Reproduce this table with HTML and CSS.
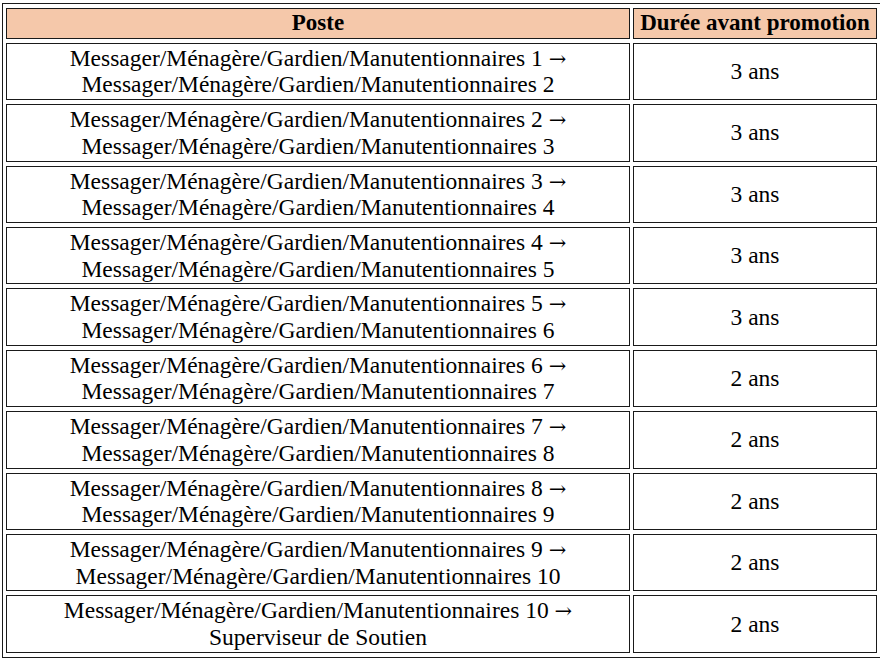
FILE: index.html
```html
<!DOCTYPE html>
<html>
<head>
<meta charset="utf-8">
<title>Promotions</title>
<link rel="stylesheet" href="styles.css">
</head>
<body>
<table class="promo">
  <thead>
    <tr><th class="col-poste">Poste</th><th class="col-duree">Durée avant promotion</th></tr>
  </thead>
  <tbody>
    <tr><td class="poste">Messager/Ménagère/Gardien/Manutentionnaires 1 <span class="arrow">→</span><br>Messager/Ménagère/Gardien/Manutentionnaires 2</td><td class="duree">3 ans</td></tr>
    <tr><td class="poste">Messager/Ménagère/Gardien/Manutentionnaires 2 <span class="arrow">→</span><br>Messager/Ménagère/Gardien/Manutentionnaires 3</td><td class="duree">3 ans</td></tr>
    <tr><td class="poste">Messager/Ménagère/Gardien/Manutentionnaires 3 <span class="arrow">→</span><br>Messager/Ménagère/Gardien/Manutentionnaires 4</td><td class="duree">3 ans</td></tr>
    <tr><td class="poste">Messager/Ménagère/Gardien/Manutentionnaires 4 <span class="arrow">→</span><br>Messager/Ménagère/Gardien/Manutentionnaires 5</td><td class="duree">3 ans</td></tr>
    <tr><td class="poste">Messager/Ménagère/Gardien/Manutentionnaires 5 <span class="arrow">→</span><br>Messager/Ménagère/Gardien/Manutentionnaires 6</td><td class="duree">3 ans</td></tr>
    <tr><td class="poste">Messager/Ménagère/Gardien/Manutentionnaires 6 <span class="arrow">→</span><br>Messager/Ménagère/Gardien/Manutentionnaires 7</td><td class="duree">2 ans</td></tr>
    <tr><td class="poste">Messager/Ménagère/Gardien/Manutentionnaires 7 <span class="arrow">→</span><br>Messager/Ménagère/Gardien/Manutentionnaires 8</td><td class="duree">2 ans</td></tr>
    <tr><td class="poste">Messager/Ménagère/Gardien/Manutentionnaires 8 <span class="arrow">→</span><br>Messager/Ménagère/Gardien/Manutentionnaires 9</td><td class="duree">2 ans</td></tr>
    <tr><td class="poste">Messager/Ménagère/Gardien/Manutentionnaires 9 <span class="arrow">→</span><br>Messager/Ménagère/Gardien/Manutentionnaires 10</td><td class="duree">2 ans</td></tr>
    <tr><td class="poste">Messager/Ménagère/Gardien/Manutentionnaires 10 <span class="arrow">→</span><br>Superviseur de Soutien</td><td class="duree">2 ans</td></tr>
  </tbody>
</table>
</body>
</html>
```
FILE: styles.css
```css
html, body {
  background: #ffffff;
}
body {
  margin: 3px 2px 0 2px;
  font-family: Tinos, "Liberation Serif", serif;
  color: #000000;
}
.promo {
  width: 879px;
  border: 1px solid #1a1a1a;
  border-spacing: 3px 4px;
  border-collapse: separate;
  font-family: Tinos, "Liberation Serif", serif;
  font-size: 23.5px;
}
.promo th,
.promo td {
  border: 1px solid #1a1a1a;
  padding: 1px 2px;
  text-align: center;
  vertical-align: middle;
  line-height: 26.7px;
}
.promo th {
  background: #f5c8aa;
  font-weight: bold;
  font-size: 23px;
}
.promo .poste,
.promo .duree {
  font-family: Tinos, "Liberation Serif", serif;
}
.arrow {
  font-family: "DejaVu Serif", serif;
  font-size: 21px;
  line-height: 1;
}
.col-duree {
  width: 238px;
  white-space: nowrap;
}
```
